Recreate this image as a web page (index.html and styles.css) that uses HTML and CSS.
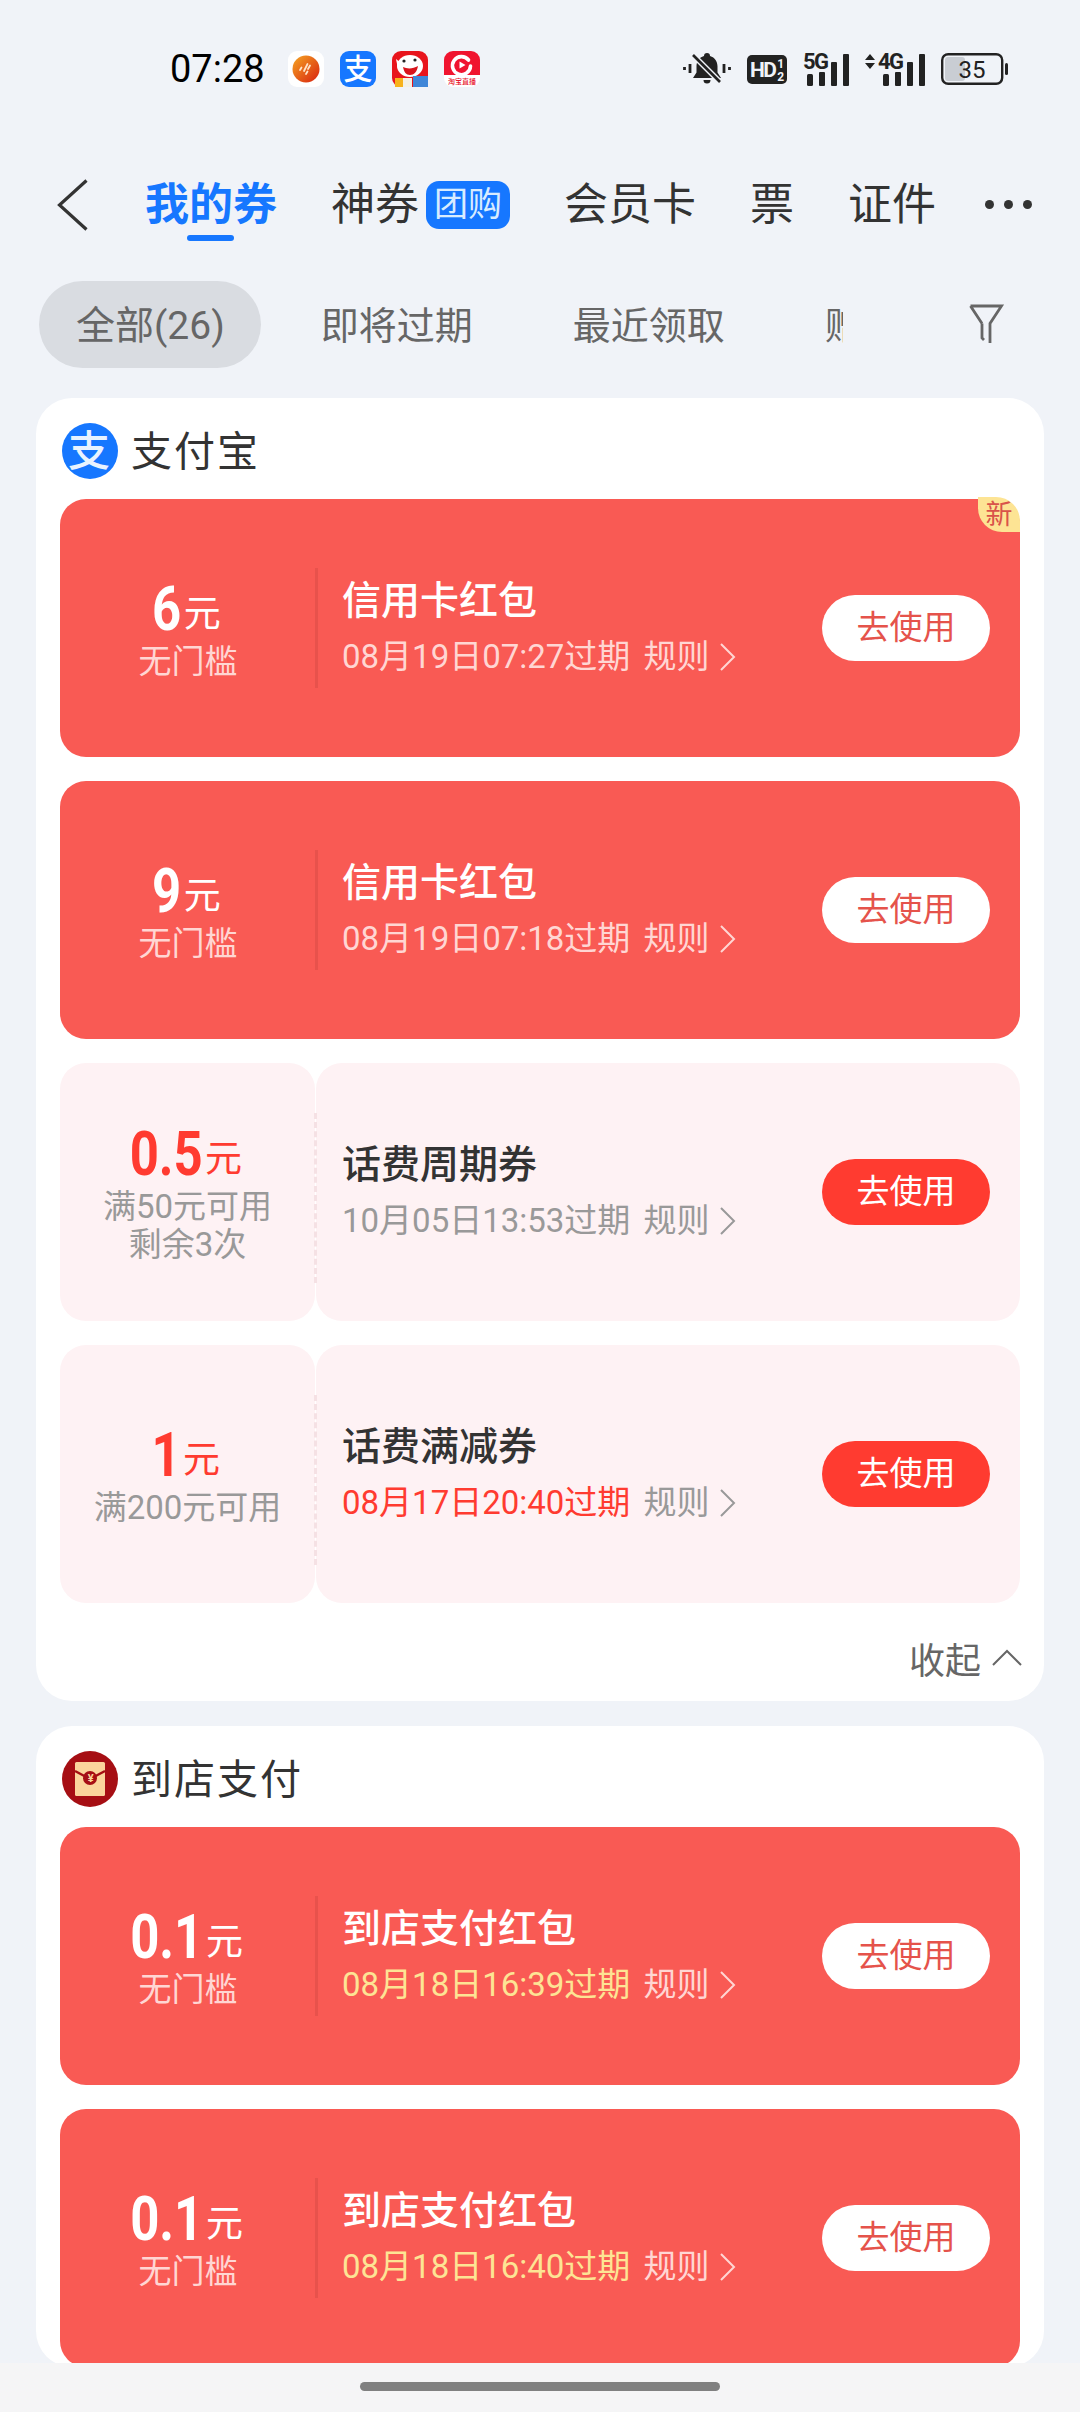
FILE: index.html
```html
<!DOCTYPE html>
<html>
<head>
    <title>我的券</title>
    <link rel="stylesheet" href="styles.css">
</head>
<body>
    <div class="status-bar">
        <span class="time">07:28</span>
        <div class="app-icons">
            <svg width="36" height="36" viewBox="0 0 36 36">
                <defs>
                    <linearGradient id="orange" x1="0" y1="0" x2="1" y2="1">
                        <stop offset="0" stop-color="#f5a623"/>
                        <stop offset="1" stop-color="#d8200f"/>
                    </linearGradient>
                </defs>
                <rect width="36" height="36" rx="9" fill="#fff"/>
                <circle cx="18" cy="18" r="13.5" fill="url(#orange)"/>
                <path d="M12 19l1.5-2.5M16 20l3.5-7M20 18l2-3.5M18 23l1.5-2.5" stroke="#ffe3c8" stroke-width="1.8" stroke-linecap="round"/>
            </svg>
            <svg width="36" height="36" viewBox="0 0 36 36">
                <rect width="36" height="36" rx="9" fill="#1677ff"/>
                <text x="18" y="28.500" class="logo-text" font-size="29" fill="#fff">支</text>
            </svg>
            <svg width="36" height="36" viewBox="0 0 36 36">
                <rect width="36" height="36" rx="9" fill="#e8141c"/>
                <path d="M4 8l5 4-3 6z" fill="#fff"/>
                <ellipse cx="18" cy="15" rx="13" ry="11" fill="#fff"/>
                <path d="M11 16c4 2 10 2 15-1-1 6-4 9-8 9s-6-3-7-8z" fill="#d8141c"/>
                <circle cx="12" cy="10" r="1.6" fill="#222"/>
                <circle cx="23" cy="9" r="1.6" fill="#222"/>
                <rect x="3" y="27" width="8" height="9" fill="#f7b21b"/>
                <rect x="11" y="27" width="9" height="9" fill="#f4f0e4"/>
                <rect x="21" y="25" width="15" height="11" fill="#3f86d8"/>
            </svg>
            <svg width="36" height="36" viewBox="0 0 36 36">
                <path d="M9 0h18a9 9 0 0 1 9 9v15H0V9a9 9 0 0 1 9-9z" fill="#f0142f"/>
                <path d="M0 24h36v3a9 9 0 0 1-9 9H9a9 9 0 0 1-9-9z" fill="#fff"/>
                <path d="M24.500 9A9 9 0 1 0 26.500 15" fill="none" stroke="#fff" stroke-width="3.600" stroke-linecap="round"/>
                <path d="M15.500 10.500l6 3.500-6 3.500z" fill="#fff"/>
                <text x="18" y="33" class="logo-text" font-size="7" fill="#e8142c">淘宝直播</text>
            </svg>
        </div>
        <div class="sys-icons">
            <svg width="48" height="34" viewBox="0 0 48 34">
                <path d="M24 1a3 3 0 0 1 3 3c5 1.500 7.500 5.500 7.500 10.500v6l3.500 5.500H10l3.500-5.500v-6c0-5 2.500-9 7.500-10.500a3 3 0 0 1 3-3z" fill="#222"/>
                <path d="M20.500 28h7a3.500 3.500 0 0 1-7 0z" fill="#222"/>
                <path d="M10.500 3.500l27 27" stroke="#f0f3f8" stroke-width="5.500"/>
                <path d="M10 3l27 27" stroke="#222" stroke-width="2.600"/>
                <path d="M1.500 15v3M7 12v9M41 12v9M46.500 15v3" stroke="#222" stroke-width="2.800"/>
            </svg>
            <svg width="40" height="29" viewBox="0 0 40 29">
                <rect width="40" height="29" rx="5" fill="#222"/>
                <text x="3" y="22" class="mini-text" font-size="21" fill="#f0f3f8">HD</text>
                <text x="33" y="12.500" class="mini-text" font-size="12" text-anchor="middle" fill="#f0f3f8">1</text>
                <text x="33" y="26" class="mini-text" font-size="12" text-anchor="middle" fill="#f0f3f8">2</text>
            </svg>
            <svg width="46" height="33" viewBox="0 0 46 33">
                <text x="0" y="16" class="mini-text" font-size="22" fill="#222">5G</text>
                <rect x="4" y="21" width="6" height="12" rx="1.500" fill="#222"/>
                <rect x="16" y="19" width="6" height="14" rx="1" fill="#222"/>
                <rect x="28" y="9" width="6" height="24" rx="1" fill="#222"/>
                <rect x="40" y="1" width="6" height="32" rx="1" fill="#222"/>
            </svg>
            <svg width="60" height="33" viewBox="0 0 60 33">
                <path d="M0 7l5-6 5 6zM0 10l5 6 5-6z" fill="#222"/>
                <text x="13" y="16" class="mini-text" font-size="22" fill="#222">4G</text>
                <rect x="18" y="21" width="6" height="12" rx="1.500" fill="#222"/>
                <rect x="30" y="19" width="6" height="14" rx="1" fill="#222"/>
                <rect x="42" y="9" width="6" height="24" rx="1" fill="#222"/>
                <rect x="54" y="1" width="6" height="32" rx="1" fill="#222"/>
            </svg>
            <svg width="67" height="32" viewBox="0 0 67 32">
                <rect x="4" y="4" width="20" height="24" rx="3" fill="#c9cdd3"/>
                <rect x="1.200" y="1.200" width="60" height="29.600" rx="6" fill="none" stroke="#222" stroke-width="2.400"/>
                <rect x="64" y="10" width="3" height="12" rx="1.500" fill="#222"/>
                <text x="31" y="25" class="battery-text" font-size="24" text-anchor="middle" fill="#222">35</text>
            </svg>
        </div>
    </div>

    <div class="tabs">
        <svg class="back" width="31" height="52" viewBox="0 0 31 52">
            <path d="M29.500 1.500L2.500 26l27 24.500" fill="none" stroke="#333" stroke-width="3.200"/>
        </svg>
        <div class="tab active">我的券</div>
        <div class="tab">神券<span class="tab-badge">团购</span></div>
        <div class="tab">会员卡</div>
        <div class="tab">票</div>
        <div class="tab">证件</div>
        <div class="more"><i></i><i></i><i></i></div>
    </div>

    <div class="filters">
        <div class="filter-scroll">
            <span class="filter selected">全部(26)</span>
            <span class="filter">即将过期</span>
            <span class="filter">最近领取</span>
            <span class="filter">赠送</span>
        </div>
        <svg class="filter-icon" width="34" height="42" viewBox="0 0 34 42">
            <path d="M1.500 2h31L21 19.500V39M13 19.500L1.500 2M13 19.500V34l2 2" fill="none" stroke="#666" stroke-width="2.800"/>
        </svg>
    </div>

    <div class="list">
        <div class="group">
            <div class="group-head">
                <svg width="56" height="56" viewBox="0 0 56 56">
                    <circle cx="28" cy="28" r="28" fill="#1677ff"/>
                    <text x="28" y="43" class="logo-text" font-size="42" fill="#e8f3ff">支</text>
                </svg>
                <span>支付宝</span>
            </div>
            <div class="coupons">
                <div class="coupon hot">
                    <div class="coupon-left">
                        <div class="amount">6<small>元</small></div>
                        <div class="cond">无门槛</div>
                    </div>
                    <div class="coupon-main">
                        <div class="coupon-info">
                            <div class="coupon-title">信用卡红包</div>
                            <div class="coupon-date"><span>08月19日07:27过期</span><em>规则</em><svg width="17" height="28" viewBox="0 0 17 28"><path d="M2 1l13 13L2 27" fill="none" stroke="currentColor" stroke-width="2"/></svg></div>
                        </div>
                        <div class="use-btn">去使用</div>
                    </div>
                    <div class="new-tag">新</div>
                </div>
                <div class="coupon hot">
                    <div class="coupon-left">
                        <div class="amount">9<small>元</small></div>
                        <div class="cond">无门槛</div>
                    </div>
                    <div class="coupon-main">
                        <div class="coupon-info">
                            <div class="coupon-title">信用卡红包</div>
                            <div class="coupon-date"><span>08月19日07:18过期</span><em>规则</em><svg width="17" height="28" viewBox="0 0 17 28"><path d="M2 1l13 13L2 27" fill="none" stroke="currentColor" stroke-width="2"/></svg></div>
                        </div>
                        <div class="use-btn">去使用</div>
                    </div>
                </div>
                <div class="coupon pale">
                    <div class="coupon-left">
                        <div class="amount">0.5<small>元</small></div>
                        <div class="cond">满50元可用</div>
                        <div class="cond">剩余3次</div>
                    </div>
                    <div class="coupon-main">
                        <div class="coupon-info">
                            <div class="coupon-title">话费周期券</div>
                            <div class="coupon-date"><span>10月05日13:53过期</span><em>规则</em><svg width="17" height="28" viewBox="0 0 17 28"><path d="M2 1l13 13L2 27" fill="none" stroke="currentColor" stroke-width="2"/></svg></div>
                        </div>
                        <div class="use-btn">去使用</div>
                    </div>
                </div>
                <div class="coupon pale">
                    <div class="coupon-left">
                        <div class="amount">1<small>元</small></div>
                        <div class="cond">满200元可用</div>
                    </div>
                    <div class="coupon-main">
                        <div class="coupon-info">
                            <div class="coupon-title">话费满减券</div>
                            <div class="coupon-date"><span class="soon">08月17日20:40过期</span><em>规则</em><svg width="17" height="28" viewBox="0 0 17 28"><path d="M2 1l13 13L2 27" fill="none" stroke="currentColor" stroke-width="2"/></svg></div>
                        </div>
                        <div class="use-btn">去使用</div>
                    </div>
                </div>
            </div>
            <div class="collapse">收起<svg width="30" height="18" viewBox="0 0 30 18"><path d="M1 16L15 2l14 14" fill="none" stroke="#666" stroke-width="2"/></svg></div>
        </div>

        <div class="group">
            <div class="group-head">
                <svg width="56" height="56" viewBox="0 0 56 56">
                    <circle cx="28" cy="28" r="28" fill="#a60f14"/>
                    <rect x="13" y="11" width="30" height="34" rx="1.500" fill="#fbd59c"/>
                    <path d="M13 20l15 8 15-8" fill="none" stroke="#a60f14" stroke-width="2.400"/>
                    <circle cx="28" cy="27" r="7" fill="#a60f14"/>
                    <text x="28" y="31" class="mini-text" font-size="11" text-anchor="middle" fill="#fbd59c">¥</text>
                </svg>
                <span>到店支付</span>
            </div>
            <div class="coupons">
                <div class="coupon hot">
                    <div class="coupon-left">
                        <div class="amount">0.1<small>元</small></div>
                        <div class="cond">无门槛</div>
                    </div>
                    <div class="coupon-main">
                        <div class="coupon-info">
                            <div class="coupon-title">到店支付红包</div>
                            <div class="coupon-date"><span class="soon">08月18日16:39过期</span><em>规则</em><svg width="17" height="28" viewBox="0 0 17 28"><path d="M2 1l13 13L2 27" fill="none" stroke="currentColor" stroke-width="2"/></svg></div>
                        </div>
                        <div class="use-btn">去使用</div>
                    </div>
                </div>
                <div class="coupon hot">
                    <div class="coupon-left">
                        <div class="amount">0.1<small>元</small></div>
                        <div class="cond">无门槛</div>
                    </div>
                    <div class="coupon-main">
                        <div class="coupon-info">
                            <div class="coupon-title">到店支付红包</div>
                            <div class="coupon-date"><span class="soon">08月18日16:40过期</span><em>规则</em><svg width="17" height="28" viewBox="0 0 17 28"><path d="M2 1l13 13L2 27" fill="none" stroke="currentColor" stroke-width="2"/></svg></div>
                        </div>
                        <div class="use-btn">去使用</div>
                    </div>
                </div>
            </div>
        </div>
    </div>

    <div class="home-bar"><i></i></div>
</body>
</html>
```

FILE: styles.css
```css
* {
    box-sizing: border-box;
}
html, body {
    height: 100%;
}
body {
    margin: 0;
    background-color: #f0f3f8;
    font-family: Roboto, "Noto Sans CJK SC", sans-serif;
    color: #333;
    display: flex;
    flex-direction: column;
    overflow: hidden;
}
svg {
    display: block;
    flex: none;
    overflow: visible;
}
.logo-text {
    font-family: "Noto Sans CJK SC", sans-serif;
    font-weight: 500;
    text-anchor: middle;
}
.mini-text {
    font-family: Roboto, sans-serif;
    font-weight: 700;
    letter-spacing: -1.5px;
}
.battery-text {
    font-family: Roboto, sans-serif;
}

/* status bar */
.status-bar {
    flex: none;
    height: 138px;
    display: flex;
    align-items: center;
    padding-left: 170px;
}
.time {
    font-size: 38px;
    color: #000;
    width: 118px;
}
.app-icons {
    display: flex;
    gap: 16px;
}
.sys-icons {
    display: flex;
    align-items: center;
    margin-left: 203px;
    gap: 16px;
}

/* tabs */
.tabs {
    flex: none;
    height: 130px;
    display: flex;
    align-items: center;
    padding: 3px 0 0 57px;
    gap: 54px;
    font-size: 44px;
}
.back {
    margin-right: 3px;
}
.tab {
    position: relative;
    display: flex;
    align-items: center;
    line-height: 60px;
    white-space: nowrap;
}
.tab.active {
    color: #1677ff;
    font-weight: 700;
}
.tab.active::after {
    content: "";
    position: absolute;
    left: 42px;
    bottom: -6px;
    width: 47px;
    height: 6px;
    border-radius: 3px;
    background-color: #1677ff;
}
.tab-badge {
    margin-left: 7px;
    width: 84px;
    height: 48px;
    line-height: 46px;
    border-radius: 13px;
    background-color: #1677ff;
    color: #d8ecff;
    font-size: 34px;
    text-align: center;
}
.more {
    display: flex;
    gap: 10px;
    margin-left: -5px;
}
.more i {
    width: 9px;
    height: 9px;
    border-radius: 50%;
    background-color: #333;
}

/* filter row */
.filters {
    flex: none;
    height: 87px;
    margin-top: 13px;
    display: flex;
    align-items: center;
    padding-left: 39px;
}
.filter-scroll {
    flex: none;
    width: 804px;
    display: flex;
    gap: 26px;
    overflow: hidden;
}
.filter {
    flex: none;
    height: 87px;
    line-height: 90px;
    padding: 0 37px;
    border-radius: 44px;
    font-size: 38px;
    color: #666;
    white-space: nowrap;
}
.filter.selected {
    font-size: 39px;
    padding-right: 36px;
    margin-right: -3px;
    background-color: #d9dce1;
}
.filter-icon {
    margin-left: 126px;
}

/* coupon groups */
.list {
    flex: 1;
    min-height: 0;
    overflow: hidden;
    margin-top: 30px;
    padding: 0 36px;
    display: flex;
    flex-direction: column;
    gap: 25px;
}
.group {
    flex: none;
    background-color: #fff;
    border-radius: 36px;
    padding: 0 24px;
}
.group-head {
    height: 101px;
    padding: 4px 0 0 2px;
    display: flex;
    align-items: center;
    gap: 13px;
    font-size: 41px;
    letter-spacing: 2px;
    color: #333;
}
.group-head span {
    line-height: 50px;
    margin-top: 2px;
}
.coupons {
    display: flex;
    flex-direction: column;
    gap: 24px;
}
.coupon {
    position: relative;
    height: 258px;
    display: flex;
    border-radius: 26px;
}
.coupon-left {
    flex: none;
    width: 256px;
    display: flex;
    flex-direction: column;
    justify-content: center;
    text-align: center;
}
/* digits in the app are a narrow face, so squeeze the row and undo it on the unit */
.amount {
    font-size: 62px;
    line-height: 68px;
    font-weight: 700;
    padding-right: 8px;
    transform: scaleX(.82);
}
.amount small {
    display: inline-block;
    font-family: "Noto Sans CJK SC", sans-serif;
    font-size: 37px;
    font-weight: 400;
    line-height: 40px;
    margin-left: 7px;
    vertical-align: 3px;
    transform: scaleX(1.22);
}
.cond {
    font-size: 33px;
    line-height: 38px;
}
.coupon-main {
    flex: 1;
    display: flex;
    align-items: center;
    justify-content: space-between;
    padding: 0 30px 0 26px;
}
.coupon-title {
    font-size: 39px;
    line-height: 56px;
    font-weight: 500;
    padding-top: 2px;
}
.coupon-date {
    display: flex;
    align-items: center;
    font-size: 33px;
    line-height: 56px;
    white-space: nowrap;
}
.coupon-date em {
    font-style: normal;
    margin: 0 10px 0 13px;
}
.use-btn {
    width: 168px;
    height: 66px;
    line-height: 66px;
    border-radius: 33px;
    font-size: 33px;
    text-align: center;
}
.new-tag {
    position: absolute;
    top: -2px;
    right: 0;
    width: 42px;
    height: 35px;
    line-height: 36px;
    background-color: #fde494;
    border-radius: 0 24px 0 24px;
    color: #d9534a;
    font-size: 27px;
    text-align: center;
}

/* red coupon */
.coupon.hot {
    background-color: #f95a54;
    color: #fff;
}
.hot .cond, .hot .coupon-date {
    color: #ffd6d3;
}
.hot .coupon-left::after {
    content: "";
    position: absolute;
    left: 255px;
    top: 69px;
    width: 3px;
    height: 120px;
    background-color: #e8524c;
}
.hot .soon {
    color: #fde494;
}
.hot .use-btn {
    background-color: #fff;
    color: #e5534b;
}

/* pale coupon */
.coupon.pale {
    color: #333;
}
.pale .coupon-left {
    background-color: #fef2f4;
    border-radius: 26px;
    width: 255px;
}
.pale .coupon-main {
    margin-left: 1px;
    background-color: #fef2f4;
    border-radius: 26px;
    padding-left: 26px;
}
.pale .coupon-left::after {
    content: "";
    position: absolute;
    left: 254px;
    top: 50px;
    height: 170px;
    border-left: 3px dashed #f5e1e4;
}
.pale .amount {
    color: #ff3b30;
}
.pale .cond, .pale .coupon-date {
    color: #999;
}
.pale .soon {
    color: #ff3b30;
}
.pale .use-btn {
    background-color: #ff3b30;
    color: #fff;
}

.collapse {
    height: 98px;
    padding: 12px 0 0;
    margin-right: -2px;
    display: flex;
    align-items: center;
    justify-content: flex-end;
    gap: 11px;
    font-size: 36px;
    color: #666;
}

/* bottom gesture bar */
.home-bar {
    flex: none;
    height: 49px;
    background-color: #f5f5f6;
    padding-top: 19px;
}
.home-bar i {
    display: block;
    width: 360px;
    height: 9px;
    margin: 0 auto;
    border-radius: 5px;
    background-color: #808080;
}
```
